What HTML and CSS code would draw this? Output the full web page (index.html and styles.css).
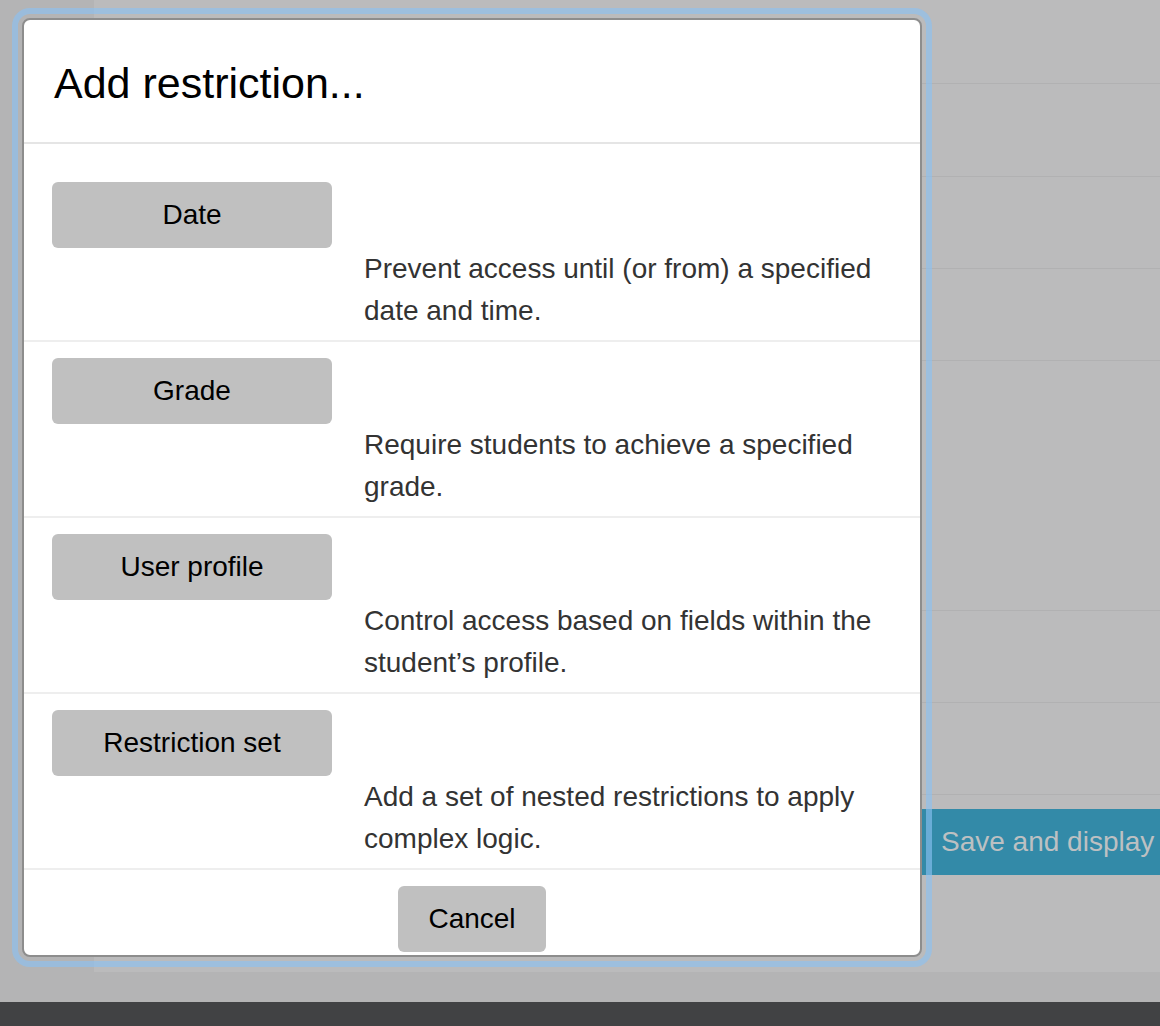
FILE: index.html
```html
<!DOCTYPE html>
<html lang="en">
<head>
<meta charset="utf-8">
<title>Add restriction</title>
<link rel="stylesheet" href="styles.css">
</head>
<body>
<div class="page">
  <div class="main">
    <div class="sidebar"></div>
    <div class="content">
      <div class="band band-a"></div>
      <div class="band band-b"></div>
      <div class="band band-c"></div>
      <div class="band band-c"></div>
      <div class="band band-d"></div>
      <div class="band band-c"></div>
      <div class="band band-c"></div>
      <div class="actions">
        <button class="save-btn" type="button">Save and display</button>
      </div>
    </div>
  </div>
  <div class="below"></div>
  <div class="footer"></div>
</div>

<div class="modal" role="dialog" aria-labelledby="modal-title">
  <div class="modal-header">
    <h1 id="modal-title" class="modal-title">Add restriction...</h1>
  </div>
  <div class="modal-body">
    <div class="option">
      <button class="opt-btn" type="button">Date</button>
      <div class="opt-desc">Prevent access until (or from) a specified date and time.</div>
    </div>
    <div class="option">
      <button class="opt-btn" type="button">Grade</button>
      <div class="opt-desc">Require students to achieve a specified grade.</div>
    </div>
    <div class="option">
      <button class="opt-btn" type="button">User profile</button>
      <div class="opt-desc">Control access based on fields within the student’s profile.</div>
    </div>
    <div class="option">
      <button class="opt-btn" type="button">Restriction set</button>
      <div class="opt-desc">Add a set of nested restrictions to apply complex logic.</div>
    </div>
  </div>
  <div class="modal-footer">
    <button class="cancel-btn" type="button">Cancel</button>
  </div>
</div>
</body>
</html>
```

FILE: styles.css
```css
html, body {
  margin: 0;
  padding: 0;
}

body {
  width: 1160px;
  height: 1026px;
  overflow: hidden;
  position: relative;
  font-family: "Liberation Sans", Arial, Helvetica, sans-serif;
  background: #b4b4b4;
}

.page {
  display: flex;
  flex-direction: column;
  height: 1026px;
}

.main {
  display: flex;
  height: 972px;
  flex: none;
}

.sidebar {
  width: 94px;
  flex: none;
  background: #b4b4b5;
}

.content {
  flex: 1;
  background: #bbbbbc;
  display: flex;
  flex-direction: column;
  overflow: hidden;
}

.band {
  border-bottom: 1px solid #b1b1b2;
  flex: none;
}

.band-a { height: 83px; }
.band-b { height: 92px; }
.band-c { height: 91px; }
.band-d { height: 249px; }

.actions {
  padding-top: 14px;
  display: flex;
}

.save-btn {
  margin-left: 812px;
  height: 66px;
  padding: 0 30px 0 35px;
  border: none;
  background: #338aa8;
  color: #bdc0c2;
  font-family: "Liberation Sans", Arial, Helvetica, sans-serif;
  font-size: 28px;
  white-space: nowrap;
  flex: none;
}

.below {
  height: 30px;
  background: #b4b4b5;
  flex: none;
}

.footer {
  flex: 1;
  background: #414244;
}

/* Modal dialog */
.modal {
  position: absolute;
  left: 22px;
  top: 18px;
  width: 896px;
  height: 935px;
  background: #ffffff;
  border: 2px solid #8d8d8d;
  border-radius: 8px;
  outline: 6px solid rgba(140, 193, 243, 0.63);
  outline-offset: 4px;
  display: flex;
  flex-direction: column;
  overflow: hidden;
}

.modal-header {
  height: 124px;
  box-sizing: border-box;
  padding: 38px 30px 0 30px;
  border-bottom: 2px solid #e5e5e5;
  flex: none;
}

.modal-title {
  margin: 0;
  font-size: 43px;
  line-height: 50px;
  font-weight: normal;
  color: #000000;
}

.modal-body {
  padding-top: 22px;
  flex: none;
}

.option {
  padding: 16px 20px 8px 28px;
  border-bottom: 2px solid #eeeeee;
}

.opt-btn,
.cancel-btn {
  display: block;
  height: 66px;
  border: none;
  border-radius: 6px;
  background: #c0c0c0;
  color: #000000;
  font-family: "Liberation Sans", Arial, Helvetica, sans-serif;
  font-size: 28px;
  padding: 0;
}

.opt-btn {
  width: 280px;
}

.opt-desc {
  margin-left: 312px;
  font-size: 28px;
  line-height: 42px;
  color: #333333;
}

.modal-footer {
  padding: 16px 0 1px;
  display: flex;
  justify-content: center;
}

.cancel-btn {
  width: 148px;
}
```
